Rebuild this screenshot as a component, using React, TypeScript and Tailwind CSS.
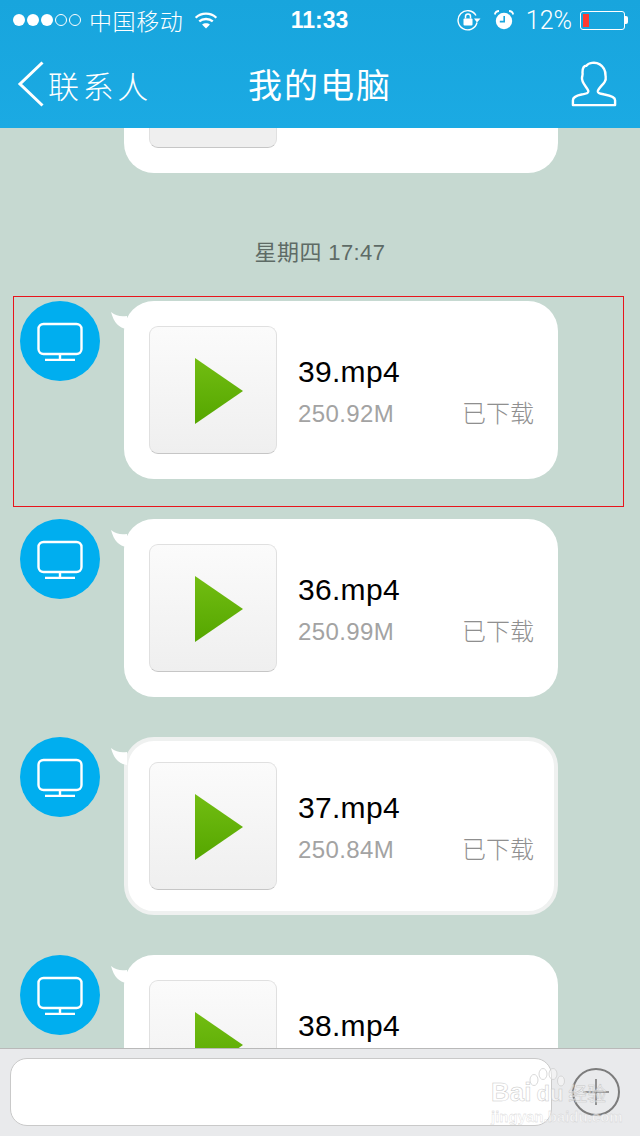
const sans = 'font-["Liberation_Sans","Noto_Sans_CJK_SC",sans-serif]'
const cjk = 'font-["Noto_Sans_CJK_SC",sans-serif]'

interface FileMessage {
  readonly name: string
  readonly size?: string
  readonly pressed?: boolean
}

// the last bubble is cut off by the input bar, only its name shows
const messages: FileMessage[] = [
  { name: '39.mp4', size: '250.92M' },
  { name: '36.mp4', size: '250.99M' },
  { name: '37.mp4', size: '250.84M', pressed: true },
  { name: '38.mp4' },
]

function SignalDots() {
  return (
    <div className="flex items-center gap-[2px]">
      {[0, 1, 2].map((i) => (
        <span key={i} className="h-[12px] w-[12px] rounded-full bg-white" />
      ))}
      {[0, 1].map((i) => (
        <span key={i} className="h-[12px] w-[12px] rounded-full border border-white" />
      ))}
    </div>
  )
}

function WifiIcon() {
  return (
    <svg width="24" height="18" viewBox="0 0 26 20" fill="none" stroke="white" strokeWidth="2.6">
      <path d="M1.5 7.5C8 1.5 18 1.5 24.5 7.5" />
      <path d="M5.5 11.5C9.5 8 16.5 8 20.5 11.5" />
      <path d="M13 19.5L8.6 15C11 13 15 13 17.4 15Z" fill="white" stroke="none" />
    </svg>
  )
}

function RotationLockIcon() {
  return (
    <svg width="24" height="22" viewBox="0 0 24 22" fill="none" stroke="white">
      <path d="M20 13.5A9.6 9.6 0 1 1 19 6.5" strokeWidth="1.4" />
      <path d="M17 9.5H23.5L20 13.5Z" fill="white" stroke="none" />
      <rect x="6.5" y="9.5" width="9" height="7" rx="1" fill="white" stroke="none" />
      <path d="M8.5 9.5V7.5A2.5 2.5 0 0 1 13.5 7.5V9.5" strokeWidth="1.5" />
    </svg>
  )
}

function AlarmIcon() {
  return (
    <svg width="20" height="20" viewBox="0 0 20 20" fill="none">
      <circle cx="10" cy="11" r="8.2" fill="white" />
      <path d="M10.2 6V11.6H5.8" stroke="#19a6dd" strokeWidth="1.6" />
      <path d="M0.8 4.5C1.2 2.5 3 1 5 1M19.2 4.5C18.8 2.5 17 1 15 1" stroke="white" strokeWidth="1.8" />
    </svg>
  )
}

function Battery() {
  return (
    <div className="flex items-center">
      <div className="h-[19px] w-[45px] rounded-[3px] border border-white p-[2px]">
        <div className="h-full w-[6px] bg-[#ff3b30]" />
      </div>
      <span className="h-[8px] w-[3px] rounded-r-[2px] bg-white" />
    </div>
  )
}

function StatusBar() {
  return (
    <div className="grid h-[40px] grid-cols-[1fr_auto_1fr] items-center pl-[13px] pr-[12px] text-white">
      <div className="flex items-center">
        <SignalDots />
        <span className={`${cjk} ml-[8px] text-[23px] font-light leading-none tracking-[0.6px]`}>中国移动</span>
        <span className="ml-[11px]">
          <WifiIcon />
        </span>
      </div>
      <span className={`${sans} -ml-[2px] text-[23px] font-bold leading-none`}>11:33</span>
      <div className="flex items-center justify-end">
        <RotationLockIcon />
        <span className="ml-[13px]">
          <AlarmIcon />
        </span>
        <span className="ml-[12px] font-['Roboto',sans-serif] text-[25px] font-light leading-none">12%</span>
        <span className="ml-[8px]">
          <Battery />
        </span>
      </div>
    </div>
  )
}

function PersonIcon() {
  return (
    <svg width="46" height="46" viewBox="0 0 48 48" fill="none" stroke="white" strokeWidth="2.5" strokeLinejoin="round">
      <path d="M2 46V41C2 37.5 6 36 11 35C15.5 34 19 34 18 31C16.5 27 10.5 22.5 11.5 17C12 15 12.5 14 12 12C12 9 13 5 16 5C18 2 25 0.5 30 3.5C34 6 36 11 36 15C36.5 18 37 19 35 22C33 25 27.5 29.5 28 32C28.5 34 31 34 35 35C41 36 46 37.5 46 41V46Z" />
    </svg>
  )
}

function NavBar() {
  return (
    <div className="grid h-[88px] grid-cols-[1fr_auto_1fr] items-center pl-[17px] pr-[23px] text-white">
      <div className="flex items-center">
        <svg width="28" height="46" viewBox="0 0 28 46" fill="none" stroke="white" strokeWidth="3">
          <path d="M25.5 1.5L3 23L25.5 44.5" />
        </svg>
        <span className={`${cjk} ml-[3px] text-[31px] font-light leading-none tracking-[3.6px]`}>联系人</span>
      </div>
      <span className={`${cjk} ml-[6px] text-[34px] leading-none tracking-[2px]`}>我的电脑</span>
      <div className="flex justify-end">
        <PersonIcon />
      </div>
    </div>
  )
}

function MonitorAvatar() {
  return (
    <div className="flex h-[80px] w-[80px] shrink-0 items-center justify-center rounded-full bg-[#00aeef]">
      <svg width="48" height="40" viewBox="0 0 48 40" fill="none" stroke="white" strokeWidth="2.4">
        <rect x="2.5" y="3" width="43" height="30" rx="5" />
        <path d="M24 33V39M9 39H39" />
      </svg>
    </div>
  )
}

function BubbleTail({ pressed }: { readonly pressed?: boolean }) {
  return (
    <svg
      className={`absolute ${pressed ? 'left-[-17px] top-[7px]' : 'left-[-13px] top-[11px]'}`}
      width="16"
      height="18"
      viewBox="0 0 16 18"
      fill="white"
    >
      <path d="M0 0C5 4 10 5 16 4V17C8 16 3 11 0 0Z" />
    </svg>
  )
}

function PlayTriangle({ id }: { readonly id: string }) {
  return (
    <svg className="ml-[11px] mt-[2px]" width="48" height="66" viewBox="0 0 48 66">
      <defs>
        <linearGradient id={id} x1="0" y1="0" x2="0" y2="1">
          <stop offset="0" stopColor="#72bd12" />
          <stop offset="1" stopColor="#55a600" />
        </linearGradient>
      </defs>
      <path d="M0 0L48 33L0 66Z" fill={`url(#${id})`} />
    </svg>
  )
}

function PlayThumb({ id }: { readonly id: string }) {
  return (
    <div className="flex h-[128px] w-[128px] shrink-0 items-center justify-center rounded-[9px] border border-[#e0e0e0] border-b-[#c6c6c6] bg-gradient-to-b from-[#fbfbfb] to-[#efefef]">
      <PlayTriangle id={id} />
    </div>
  )
}

function FileBubble({ message }: { readonly message: FileMessage }) {
  return (
    <div className="flex h-[178px] shrink-0 pl-[20px]">
      <MonitorAvatar />
      <div
        className={`relative ml-[24px] flex h-[178px] w-[434px] items-start rounded-[30px] bg-white ${
          message.pressed ? 'border-[4px] border-[#eff1f0] p-[21px]' : 'p-[25px]'
        }`}
      >
        <BubbleTail pressed={message.pressed} />
        <PlayThumb id={`play-${message.name.replace('.', '-')}`} />
        <div className="ml-[21px] flex-1 pt-[26px]">
          <div className={`${sans} text-[30px] leading-[40px] tracking-[0.3px] text-black`}>{message.name}</div>
          {message.size && (
            <div className="mt-[6px] flex items-center justify-between">
              <span className={`${sans} text-[24px] leading-[32px] tracking-[0.4px] text-[#a3a3a3]`}>{message.size}</span>
              <span className={`${cjk} -mr-[1px] -mt-[4px] text-[24px] font-light leading-[32px] text-[#8f8f8f]`}>已下载</span>
            </div>
          )}
        </div>
      </div>
    </div>
  )
}

function Watermark() {
  return (
    <div className="pointer-events-none absolute left-[491px] top-[1068px] h-[56px] w-[116px] text-white/50">
      <svg className="absolute left-[38px] top-0" width="36" height="24" viewBox="0 0 36 24" fill="rgba(255,255,255,0.4)" stroke="#cfcfcf" strokeWidth="0.8">
        <ellipse cx="5" cy="12" rx="4" ry="5.5" />
        <ellipse cx="14" cy="6" rx="4" ry="5.5" />
        <ellipse cx="24" cy="6" rx="4" ry="5.5" />
        <ellipse cx="32" cy="13" rx="3.5" ry="5" />
      </svg>
      <div className={`${sans} mt-[11px] flex items-baseline whitespace-nowrap text-[26px] font-bold leading-[26px] [-webkit-text-stroke:0.5px_#c8c8c8]`}>
        <span>Bai</span>
        <span className="ml-[5px] text-[22px]">du</span>
        <span className={`${cjk} ml-[5px] text-[19px] font-normal`}>经验</span>
      </div>
      <div className={`${sans} whitespace-nowrap text-[15px] font-bold leading-[20px] [-webkit-text-stroke:0.3px_#d0d0d0]`}>jingyan.baidu.com</div>
    </div>
  )
}

function InputBar() {
  return (
    <div className="flex h-[88px] shrink-0 items-center border-t border-[#b9b9b9] bg-[#e9eaec] pb-[1px] pl-[10px] pr-[20px]">
      <div className="h-[68px] w-[542px] rounded-[17px] border border-[#c9c9c9] bg-white" />
      <svg className="ml-[20px]" width="48" height="48" viewBox="0 0 48 48" fill="none" stroke="#7c7c7c" strokeWidth="2">
        <circle cx="24" cy="24" r="23" />
        <path d="M24 11V37M11 24H37" strokeWidth="1.6" />
      </svg>
    </div>
  )
}

export default function App() {
  return (
    <div className="relative flex h-[1136px] w-[640px] flex-col overflow-hidden bg-[#c6d9d1]">
      <header className="shrink-0 bg-gradient-to-b from-[#18a5dd] to-[#1baae3]">
        <StatusBar />
        <NavBar />
      </header>

      <main className="min-h-0 flex-1 overflow-hidden">
        {/* tail end of the previous message, scrolled off the top */}
        <div className="ml-[124px] h-[45px] w-[434px] rounded-b-[30px] bg-white pl-[25px]">
          <div className="h-[20px] w-[128px] rounded-b-[9px] border border-t-0 border-[#e0e0e0] border-b-[#c6c6c6] bg-[#efefef]" />
        </div>
        <div className={`${sans} mt-[66px] text-center text-[22px] font-normal leading-[28px] tracking-[0.4px] text-[#5e6b66]`}>
          星期四 17:47
        </div>
        <div className="mt-[34px] flex flex-col gap-[40px]">
          {messages.map((m) => (
            <FileBubble key={m.name} message={m} />
          ))}
        </div>
      </main>

      <InputBar />

      {/* annotation box and watermark sit on top of the screenshot */}
      <div className="pointer-events-none absolute left-[13px] top-[296px] h-[211px] w-[611px] border border-[#e8141c]" />
      <Watermark />
    </div>
  )
}
